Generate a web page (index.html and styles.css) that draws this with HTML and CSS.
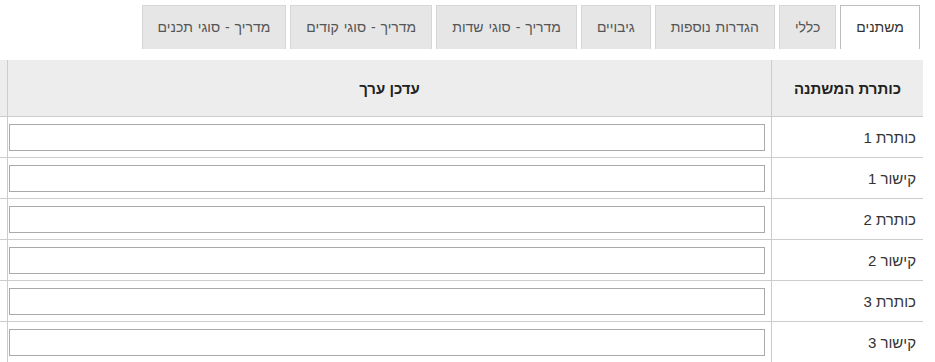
FILE: index.html
```html
<!DOCTYPE html>
<html lang="he" dir="rtl">
<head>
  <meta charset="UTF-8" />
  <title>משתנים</title>
  <link rel="stylesheet" href="styles.css">
</head>
<body>
  <!-- Tabs row -->
  <div class="tabs">
    <div class="tab active">משתנים</div>
    <div class="tab">כללי</div>
    <div class="tab">הגדרות נוספות</div>
    <div class="tab">גיבויים</div>
    <div class="tab">מדריך - סוגי שדות</div>
    <div class="tab">מדריך - סוגי קודים</div>
    <div class="tab">מדריך - סוגי תכנים</div>
  </div>

  <div class="table-wrap">
    <table class="vars">
      <thead>
        <tr>
          <th class="col-name">כותרת המשתנה</th>
          <th class="col-value">עדכן ערך</th>
          <th class="col-extra"></th>
        </tr>
      </thead>
      <tbody>
        <tr>
          <td class="col-name">כותרת 1</td>
          <td class="col-value"><input type="text"></td>
          <td class="col-extra"></td>
        </tr>
        <tr>
          <td class="col-name">קישור 1</td>
          <td class="col-value"><input type="text"></td>
          <td class="col-extra"></td>
        </tr>
        <tr>
          <td class="col-name">כותרת 2</td>
          <td class="col-value"><input type="text"></td>
          <td class="col-extra"></td>
        </tr>
        <tr>
          <td class="col-name">קישור 2</td>
          <td class="col-value"><input type="text"></td>
          <td class="col-extra"></td>
        </tr>
        <tr>
          <td class="col-name">כותרת 3</td>
          <td class="col-value"><input type="text"></td>
          <td class="col-extra"></td>
        </tr>
        <tr>
          <td class="col-name">קישור 3</td>
          <td class="col-value"><input type="text"></td>
          <td class="col-extra"></td>
        </tr>
      </tbody>
    </table>
  </div>
</body>
</html>
```

FILE: styles.css
```css
/* Admin settings page - variables tab */
body {
  margin: 0;
  background: #fff;
  font-family: "Liberation Sans", Arial, "DejaVu Sans", sans-serif;
  color: #333;
  direction: rtl;
}
.tabs {
  display: flex;
  gap: 4px;
  margin-top: 5px;
  padding-right: 15px;
  height: 44px;
}
.tab {
  background: #e6e6e6;
  border: 1px solid #d6d6d6;
  border-bottom: none;
  padding: 0 15px;
  line-height: 43px;
  font-size: 14px;
  word-spacing: 1px;
  color: #555;
  white-space: nowrap;
}
.tab.active {
  background: #fff;
  border-color: #bdbdbd;
  color: #333;
}
.table-wrap {
  margin-top: 11px;
  margin-right: 12px;
  overflow: hidden;
}
.vars {
  border-collapse: collapse;
  width: 960px;
  table-layout: fixed;
}
.vars th {
  background: #ededed;
  height: 56px;
  padding: 0;
  font-size: 15px;
  font-weight: bold;
  color: #222;
  text-align: center;
  border-bottom: 1px solid #ccc;
}
.vars td {
  height: 40px;
  padding: 0;
  font-size: 15px;
  border-bottom: 1px solid #ccc;
}
.vars .col-name {
  width: 151px;
  border-left: 1px solid #ccc;
}
.vars td.col-name {
  text-align: right;
  padding-right: 7px;
}
.vars .col-value {
  width: 763px;
  border-left: 1px solid #ccc;
}
.vars td.col-value {
  padding: 0 6px 0 1px;
}
.vars .col-extra {
  width: 44px;
}
.vars input {
  display: block;
  box-sizing: border-box;
  width: 100%;
  height: 27px;
  margin: 0;
  border: 1px solid #aaa;
  background: #fff;
}
```
